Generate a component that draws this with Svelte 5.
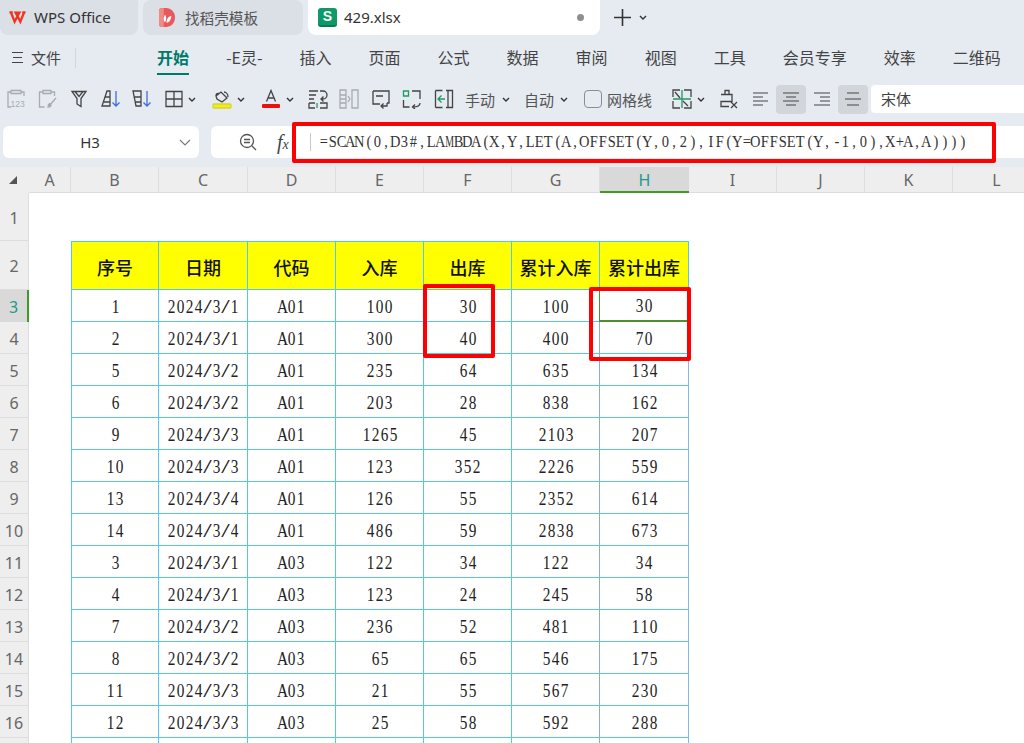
<script>
  const menu = ['开始', '-E灵-', '插入', '页面', '公式', '数据', '审阅', '视图', '工具', '会员专享', '效率', '二维码'];
  const cols = ['A', 'B', 'C', 'D', 'E', 'F', 'G', 'H', 'I', 'J', 'K', 'L'];
  const heads = ['序号', '日期', '代码', '入库', '出库', '累计入库', '累计出库'];
  const formula = '=SCAN(0,D3#,LAMBDA(X,Y,LET(A,OFFSET(Y,0,2),IF(Y=OFFSET(Y,-1,0),X+A,A))))';

  const rows = [
    ['1', '2024/3/1', 'A01', '100', '30', '100', '30'],
    ['2', '2024/3/1', 'A01', '300', '40', '400', '70'],
    ['5', '2024/3/2', 'A01', '235', '64', '635', '134'],
    ['6', '2024/3/2', 'A01', '203', '28', '838', '162'],
    ['9', '2024/3/3', 'A01', '1265', '45', '2103', '207'],
    ['10', '2024/3/3', 'A01', '123', '352', '2226', '559'],
    ['13', '2024/3/4', 'A01', '126', '55', '2352', '614'],
    ['14', '2024/3/4', 'A01', '486', '59', '2838', '673'],
    ['3', '2024/3/1', 'A03', '122', '34', '122', '34'],
    ['4', '2024/3/1', 'A03', '123', '24', '245', '58'],
    ['7', '2024/3/2', 'A03', '236', '52', '481', '110'],
    ['8', '2024/3/2', 'A03', '65', '65', '546', '175'],
    ['11', '2024/3/3', 'A03', '21', '55', '567', '230'],
    ['12', '2024/3/3', 'A03', '25', '58', '592', '288'],
    ['', '', '', '', '', '', '']
  ];
</script>

{#snippet half(text)}
  {#each text.split('') as ch}<span class="ch"><span class:wide={ch === 'M'} class:slash={ch === '/'}>{ch}</span></span>{/each}
{/snippet}

{#snippet chev()}
  <svg class="chev" viewBox="0 0 8 5"><path d="M1 1l3 3 3-3" /></svg>
{/snippet}

<div class="page">
  <div class="tabs">
    <div class="tab first">
      <svg class="logo" viewBox="0 0 20 15"><path d="M1.500 2h3.500M15 2h3.500M3 2l4 10 3-6 3 6 4-10M10 6L8 2.500h4z" fill="none" stroke="#f0341e" stroke-width="2.400" /></svg>
      <span class="latin">WPS Office</span>
    </div>
    <div class="tab second">
      <svg class="doc" viewBox="0 0 18 20"><path d="M0 3a3 3 0 0 1 3-3h5a9 10 0 0 1 0 20H3a3 3 0 0 1-3-3z" fill="#e9585a" /><path d="M0 3a3 3 0 0 1 3-3h2v20H3a3 3 0 0 1-3-3z" fill="#f08a86" /><path d="M6.500 15c-2.500-2-1.500-6 0-8 1.500 2 1.500 6 0 8zM8 15.500c0-4 2.500-7 5-7 0 3-1.500 7-5 7z" fill="#fff" /></svg>
      <span>找稻壳模板</span>
    </div>
    <div class="tab active">
      <span class="sheet-icon">S</span>
      <span class="latin name">429.xlsx</span>
      <i class="dot"></i>
    </div>
    <svg class="plus" viewBox="0 0 17 17"><path d="M8.500 0v17M0 8.500h17" /></svg>
    <svg class="chev tabchev" viewBox="0 0 8 5"><path d="M1 1l3 3 3-3" /></svg>
  </div>

  <div class="menu">
    <div class="file">
      <svg class="burger" viewBox="0 0 11 11"><path d="M0 .5h11M1 5.500h9M0 10.500h11" /></svg>
      <span>文件</span>
    </div>
    <div class="items">
      {#each menu as m, i}
        <span class:on={i === 0}>{m}</span>
      {/each}
    </div>
  </div>

  <div class="tools">
    <div class="grp icons">
      <svg viewBox="0 0 20 20" class="ic faint"><path d="M5 3H2v15h3M15 3h3v4M5 1.500h10v3H5z" /><text x="4.500" y="18" font-size="8.500">123</text></svg>
      <svg viewBox="0 0 20 20" class="ic faint"><path d="M5 3H1.500v15h5M13 3h3.500v4M5 1.500h8v3H5zM11 17l7-8M10 18c2 0 3-1 3-2l-1.500-1.500c-1 .5-1.500 2-1.500 3.500z" /></svg>
      <svg viewBox="0 0 20 20" class="ic"><path d="M3 2.500h14l-5 7v8l-4-2.500V9.500zM6 2.500l4 5 4-5" /></svg>
      <svg viewBox="0 0 20 20" class="ic"><path d="M6 2h3v15H1zM3 13h6M4.500 8h4.500" /><path class="blue" d="M15 2v15M11.500 13.500L15 17l3.500-3.500" /></svg>
      <svg viewBox="0 0 20 20" class="ic"><path d="M1 2h8v15H4zM2.500 8H9M3.500 13H9" /><path class="blue" d="M15 2v15M11.500 13.500L15 17l3.500-3.500" /></svg>
    </div>
    <div class="grp g2">
      <svg viewBox="0 0 18 18" class="ic big"><path d="M1 1.500h16v15H1zM9 1.500v15M1 9h16" /></svg>
      {@render chev()}
    </div>
    <div class="grp g3">
      <svg viewBox="0 0 20 20" class="ic"><path d="M4 7l5-4 6 6-5 4-5-3zM4 7c0-2 1-3 3-2.500M12 3c2 0 4 2 4 5" /><rect x="1" y="15" width="18" height="4" rx="1" fill="#f2ee10" stroke="#d8d430" /></svg>
      {@render chev()}
    </div>
    <div class="grp g3">
      <svg viewBox="0 0 20 20" class="ic"><path d="M5.500 12.500L10 1.500l4.500 11M7 9h6" /><rect x="1" y="15" width="18" height="4" rx="1" fill="#ee0f0f" stroke="none" /></svg>
      {@render chev()}
    </div>
    <div class="grp icons g4">
      <svg viewBox="0 0 20 20" class="ic"><path d="M1 2h9M1 6h7M1 10h5M12 2h3a3.500 3.500 0 0 1 0 8h-2M15.500 7.500L13 10l2.500 2.500M1 14h6M1 14v5h6M12 14h7v5h-7" /><path class="green" d="M9 14v5" /></svg>
      <svg viewBox="0 0 20 20" class="ic faint"><path d="M1 1h6v18H1zM13 1h6v18h-6zM1 6h6M1 10h6M1 14h6M9 7l2 3-2 3" /></svg>
      <svg viewBox="0 0 20 20" class="ic"><path d="M2 2h16v12h-2M2 2v13h7M5 7h7M16 14v3h-6M12.500 14.500L10 17l2.500 2.500" /></svg>
      <svg viewBox="0 0 20 20" class="ic"><path class="green" d="M1.500 2h5v5h-5z" /><path d="M10 2h8v8M1.500 11v7h6M18 14c0 3-3 4-7 4M13 15.500L10.500 18l2.500 2" /></svg>
      <svg viewBox="0 0 20 20" class="ic"><path d="M1.500 1.500h7M1.500 18.500h7M1.500 1.500v17M12 1.500h6.500v17H12M14 1.500v17" /><path class="green" d="M11 10H4M7.500 6.500L4 10l3.500 3.500" /></svg>
    </div>
    <div class="grp g5">
      <span>手动</span>
      {@render chev()}
    </div>
    <div class="grp g6">
      <span>自动</span>
      {@render chev()}
    </div>
    <div class="grp g7">
      <i class="check"></i>
      <span>网格线</span>
    </div>
    <div class="grp g8">
      <svg viewBox="0 0 20 20" class="ic"><path d="M1 8V1h7M12 1h7v7M1 12v7h7M12 19h7v-7M3 3l5 6M11 12l5 5" /><path class="green" d="M10 1v18M1 10h18" /></svg>
      {@render chev()}
    </div>
    <div class="grp g9">
      <svg viewBox="0 0 20 20" class="ic"><path d="M10 5V1.500H6v4M2 5.500h11v7H2v5h8" /><path d="M12 13l6 6M18 13l-6 6" /></svg>
    </div>
    <div class="aligns">
      <span class="al"><svg viewBox="0 0 16 14" class="ic al-ic"><path d="M1 1h15M1 5h10M1 9h15M1 13h10" /></svg></span>
      <span class="al pressed"><svg viewBox="0 0 16 14" class="ic al-ic"><path d="M0 1h16M3 5h10M0 9h16M3 13h10" /></svg></span>
      <span class="al"><svg viewBox="0 0 16 14" class="ic al-ic"><path d="M0 1h16M6 5h10M0 13h16M6 9h10" /></svg></span>
      <span class="al pressed"><svg viewBox="0 0 16 14" class="ic al-ic"><path d="M2 1h12M0 7h16M2 13h12" /></svg></span>
    </div>
    <div class="fontbox">宋体</div>
  </div>

  <div class="fbar">
    <div class="namebox">
      <span class="latin">H3</span>
      <svg class="namechev" viewBox="0 0 12 7"><path d="M1 1l5 5 5-5" /></svg>
    </div>
    <div class="fbox">
      <svg class="find" viewBox="0 0 18 18"><circle cx="8" cy="8" r="6.500" /><path d="M5 6.500h6M5 9.500h6M13 13l4 4" /></svg>
      <span class="fx">f<small>x</small></span>
      <i class="vline"></i>
      <div class="ftext">{@render half(formula)}</div>
    </div>
  </div>

  <div class="grid">
    <div class="hd corner"><i></i></div>
    {#each cols as c}
      <div class="hd col" class:sel={c === 'H'}>{c}</div>
    {/each}

    <div class="hd rowh">1</div>
    <div class="hd rowh">2</div>
    <div class="blank"></div>
    {#each heads as h}
      <div class="cell head">{h}</div>
    {/each}

    {#each rows as r, i}
      <div class="hd rowh" class:sel={i === 0}>{i < 14 ? i + 3 : ''}</div>
      <div class="blank"></div>
      {#each r as v, j}
        <div class="cell" class:lastcol={j === 6} class:focus={i === 0 && j === 6}>{@render half(v)}</div>
      {/each}
    {/each}
  </div>

  <div class="mark m-formula"></div>
  <div class="mark m-out"></div>
  <div class="mark m-sum"></div>
</div>

<style>
  :global(body) {
    margin: 0;
    background: #fff;
  }

  .page {
    position: relative;
    width: 1024px;
    height: 743px;
    overflow: hidden;
    font-family: "Noto Sans CJK SC", "Noto Sans", sans-serif;
    color: #444;
    background: #fff;
  }

  .latin {
    font-family: "Noto Sans", "Noto Sans CJK SC", sans-serif;
  }

  .tabs {
    height: 36px;
    background: #e6eaf1;
    display: flex;
    gap: 5px;
    font-size: 15px;
  }

  .tab {
    height: 35px;
    box-sizing: border-box;
    display: flex;
    align-items: center;
    background: #dbdfe6;
    border-radius: 0 0 8px 8px;
    white-space: nowrap;
    padding-bottom: 1px;
  }

  .first {
    width: 138px;
    padding-left: 8px;
    gap: 7px;
    color: #333;
  }

  .second {
    width: 160px;
    border-radius: 8px;
    padding-left: 16px;
    gap: 9px;
    color: #555;
    font-size: 14.600px;
  }

  .active {
    width: 292px;
    background: #fff;
    padding-left: 10px;
    gap: 7px;
    color: #333;
  }

  .logo {
    width: 19px;
    height: 15px;
  }

  .doc {
    width: 17px;
    height: 19px;
  }

  .sheet-icon {
    width: 19px;
    height: 19px;
    border-radius: 3px;
    background: #0d9a68;
    border-bottom: 2px solid #0a7a52;
    box-sizing: border-box;
    color: #fff;
    font: 700 14px/17px "Liberation Sans", sans-serif;
    text-align: center;
  }

  .name {
    flex: 1;
  }

  .dot {
    width: 7px;
    height: 7px;
    border-radius: 50%;
    background: #8d8f92;
    margin-right: 16px;
  }

  .plus {
    width: 17px;
    height: 17px;
    margin: 9px 0 0 9px;
    stroke: #333;
    stroke-width: 1.6;
    fill: none;
  }

  .chev {
    width: 8px;
    height: 5px;
    flex: none;
    fill: none;
    stroke: #333;
    stroke-width: 1.4;
  }

  .tabchev {
    margin: 15px 0 0 3px;
  }

  .menu {
    height: 44px;
    box-sizing: border-box;
    background: #e6eaf1;
    display: flex;
    align-items: flex-start;
    padding-top: 8px;
  }

  .file {
    width: 157px;
    flex: none;
    height: 26px;
    display: flex;
    align-items: center;
    padding-left: 12px;
    box-sizing: border-box;
    font-size: 15px;
    position: relative;
  }

  .file::after {
    content: "";
    position: absolute;
    left: 75px;
    top: 4px;
    height: 20px;
    width: 1px;
    background: #d2d5da;
  }

  .burger {
    width: 11px;
    height: 11px;
    margin-right: 8px;
    fill: none;
    stroke: #444;
    stroke-width: 1.2;
  }

  .items {
    display: flex;
    gap: 37px;
    font-size: 16px;
    line-height: 26px;
    white-space: nowrap;
  }

  .items span {
    height: 31px;
    box-sizing: border-box;
  }

  .items .on {
    color: #007a68;
    font-weight: 700;
    border-bottom: 2px solid #007a68;
  }

  .tools {
    height: 45px;
    box-sizing: border-box;
    background: #e6eaf1;
    display: flex;
    align-items: center;
    padding: 0 0 7px 6px;
    font-size: 15px;
    white-space: nowrap;
    color: #555;
  }

  .grp {
    display: flex;
    align-items: center;
    gap: 5px;
    flex: none;
  }

  .icons {
    gap: 11.5px;
  }

  .g2 {
    margin-left: 13px;
  }

  .g3 {
    margin-left: 16px;
  }

  .g4 {
    margin-left: 13.500px;
  }

  .g5 {
    margin-left: 11.500px;
    gap: 7px;
  }

  .g6 {
    margin-left: 14px;
    gap: 6px;
  }

  .g7 {
    margin-left: 16px;
    gap: 5px;
  }

  .g8 {
    margin-left: 20px;
  }

  .g9 {
    margin-left: 14px;
  }

  .ic {
    width: 20px;
    height: 20px;
    flex: none;
    fill: none;
    stroke: #444;
    stroke-width: 1.3;
  }

  .ic.big {
    width: 18px;
    height: 18px;
  }

  .ic.faint {
    stroke: #a9abaf;
  }

  .ic text {
    fill: #a9abaf;
    stroke: none;
    font-family: "Liberation Sans", sans-serif;
  }

  .ic .blue {
    stroke: #3d6fe0;
  }

  .ic .green {
    stroke: #1f9a62;
  }

  .check {
    width: 16px;
    height: 16px;
    border: 1px solid #8a8d92;
    border-radius: 4px;
  }

  .aligns {
    display: flex;
    margin-left: 6px;
    flex: none;
  }

  .al {
    width: 30px;
    height: 29px;
    display: flex;
    align-items: center;
    justify-content: center;
    border-radius: 4px;
  }

  .al.pressed {
    background: #d2d6db;
  }

  .al + .al {
    margin-left: 1px;
  }

  .ic.al-ic {
    width: 16px;
    height: 14px;
    stroke-width: 1.1;
  }

  .fontbox {
    flex: 1;
    height: 28px;
    margin-left: 3px;
    background: #fff;
    border-radius: 4px 0 0 4px;
    padding-left: 10px;
    line-height: 28px;
    color: #444;
  }

  .fbar {
    height: 42px;
    box-sizing: border-box;
    background: #e6eaf1;
    display: flex;
    gap: 12px;
    padding: 1px 0 0 3px;
  }

  .namebox {
    width: 196px;
    height: 32px;
    background: #fff;
    border-radius: 6px;
    display: flex;
    align-items: center;
    position: relative;
    justify-content: center;
    font-size: 15px;
    color: #333;
    box-sizing: border-box;
    padding-right: 22px;
  }

  .namechev {
    position: absolute;
    right: 8px;
    top: 13px;
    width: 12px;
    height: 7px;
    fill: none;
    stroke: #777;
    stroke-width: 1.1;
  }

  .fbox {
    flex: 1;
    height: 32px;
    background: #fff;
    border-radius: 6px 0 0 6px;
    display: flex;
    align-items: center;
  }

  .find {
    width: 18px;
    height: 18px;
    margin-left: 28px;
    fill: none;
    stroke: #555;
    stroke-width: 1.3;
  }

  .fx {
    margin-left: 20px;
    width: 20px;
    font: italic 20px "Liberation Serif", serif;
    color: #444;
  }

  .fx small {
    font-size: 14px;
  }

  .vline {
    width: 1px;
    height: 18px;
    background: #c9c9c9;
    margin-left: 13px;
  }

  .ftext {
    margin-left: 8px;
    font: 17px/20px "Liberation Serif", serif;
    color: #333;
    display: flex;
  }

  .ch {
    display: inline-flex;
    justify-content: center;
    width: 9px;
  }

  .ch span {
    display: inline-block;
    transform: scaleX(0.85);
    white-space: pre;
  }

  .ch span.wide {
    transform: scaleX(0.58);
  }

  .ch span.slash {
    transform: scaleX(1.7);
  }

  .grid {
    display: grid;
    grid-template-columns: 29px 42px 88px 89px 88px 88px 88px 88px 89px 88px 88px 88px 88px;
    grid-template-rows: 26px 48px 49px;
    grid-auto-rows: 32px;
    overflow: hidden;
    width: 1024px;
  }

  .hd {
    background: #eee;
    color: #666;
    font: 16px "Noto Sans", sans-serif;
    display: flex;
    align-items: center;
    justify-content: center;
    box-sizing: border-box;
  }

  .corner i {
    border: 4.500px solid transparent;
    border-right-color: #555;
    border-bottom-color: #555;
    margin: 0 4px 0 0;
  }

  .col {
    border-right: 1px solid #ddd;
    border-bottom: 1px solid #ddd;
    padding-top: 1px;
  }

  .col.sel {
    background: #d9d9d9;
    color: #1a9a8e;
    border-bottom: 2px solid #3f9a2a;
    border-right: 0;
  }

  .rowh {
    grid-column: 1;
    border-bottom: 1px solid #ddd;
    border-right: 1px solid #ddd;
    padding-top: 2px;
  }

  .rowh.sel {
    background: #d9d9d9;
    color: #1a9a8e;
    border-right: 2px solid #3f9a2a;
    border-bottom: 0;
  }

  .blank {
    grid-column: 2;
  }

  .cell {
    display: flex;
    align-items: center;
    justify-content: center;
    font: 18px/1 "Liberation Serif", serif;
    color: #222;
    border-right: 1px solid #52c6f4;
    border-bottom: 1px solid #52c6f4;
    box-sizing: border-box;
    padding-top: 2px;
  }

  .cell.head {
    background: #ff0;
    font: 500 18px/1 "Noto Sans CJK SC", sans-serif;
    color: #111;
    border-top: 1px solid #52c6f4;
    white-space: nowrap;
  }

  .blank + .cell {
    border-left: 1px solid #52c6f4;
  }

  .cell.lastcol {
    margin-left: -1px;
    border-left: 1px solid #8ea9db;
    border-right-color: #7db9ea;
  }

  .cell.focus {
    border-left-color: #4f8f2c;
    border-bottom: 2px solid #4f8f2c;
  }

  .mark {
    position: absolute;
    box-sizing: border-box;
    border: 4px solid #f00;
    border-radius: 2px;
    pointer-events: none;
  }

  .m-formula {
    left: 292px;
    top: 122px;
    width: 704px;
    height: 41px;
  }

  .m-out {
    left: 423px;
    top: 284px;
    width: 72px;
    height: 74px;
  }

  .m-sum {
    left: 589px;
    top: 287px;
    width: 102px;
    height: 74px;
  }
</style>
